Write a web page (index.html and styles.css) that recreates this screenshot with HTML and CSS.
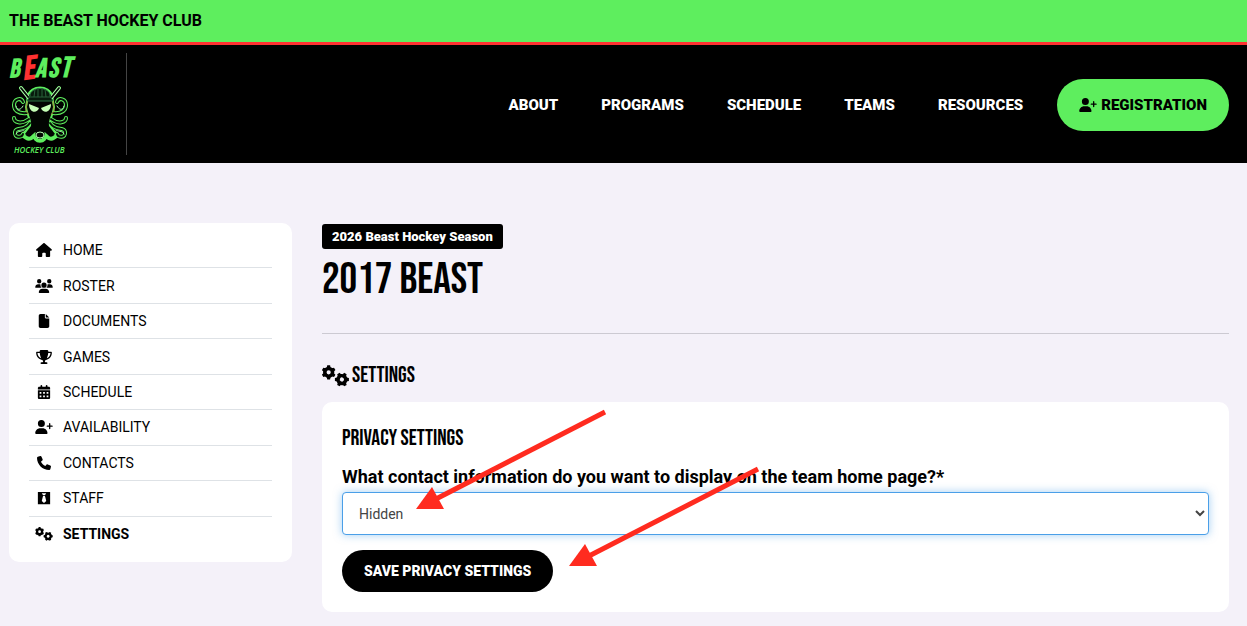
FILE: index.html
```html
<!DOCTYPE html>
<html lang="en">
  <head>
    <meta charset="UTF-8" />
    <meta name="viewport" content="width=device-width, initial-scale=1.0" />
    <title>2017 Beast - Settings</title>
    <link rel="stylesheet" href="styles.css">
  </head>

  <body>
    <!-- Icon sprite -->
    <svg class="sprite" aria-hidden="true">
      <symbol id="i-home" viewBox="0 0 576 512">
        <path d="M575.8 255.5c0 18-15 32.1-32 32.1h-32l.7 160.2c0 2.7-.2 5.4-.5 8.1V472c0 22.1-17.9 40-40 40H392c-22.1 0-40-17.9-40-40V384c0-17.7-14.3-32-32-32H256c-17.7 0-32 14.3-32 32v88c0 22.1-17.9 40-40 40H104c-22.1 0-40-17.9-40-40V287.6H32c-18 0-32-14-32-32.1c0-9 3-17 10-24L266.4 8c7-7 15-8 22-8s15 2 21 7L564.8 231.5c8 7 12 15 11 24z"/>
      </symbol>
      <symbol id="i-users" viewBox="0 0 640 512">
        <path d="M144 0a80 80 0 1 1 0 160A80 80 0 1 1 144 0zM512 0a80 80 0 1 1 0 160A80 80 0 1 1 512 0zM0 298.7C0 239.8 47.8 192 106.7 192h42.7c15.9 0 31 3.5 44.6 9.7c-1.3 7.2-1.9 14.7-1.9 22.3c0 38.2 16.8 72.5 43.3 96H21.3C9.6 320 0 310.4 0 298.7zM405.3 320c26-23.5 42.6-57.8 42.6-96c0-7.6-.7-15-1.9-22.3c13.6-6.3 28.7-9.7 44.6-9.7h42.7C592.2 192 640 239.8 640 298.7c0 11.8-9.6 21.3-21.3 21.3H405.3zM224 224a96 96 0 1 1 192 0 96 96 0 1 1 -192 0zM128 485.3C128 411.7 187.7 352 261.3 352H378.7C452.3 352 512 411.7 512 485.3c0 14.7-11.9 26.7-26.7 26.7H154.7c-14.7 0-26.7-11.9-26.7-26.7z"/>
      </symbol>
      <symbol id="i-file" viewBox="0 0 384 512">
        <path d="M0 64C0 28.7 28.7 0 64 0H224V128c0 17.7 14.3 32 32 32H384V448c0 35.3-28.7 64-64 64H64c-35.3 0-64-28.7-64-64V64zm384 64H256V0L384 128z"/>
      </symbol>
      <symbol id="i-trophy" viewBox="0 0 576 512">
        <path d="M400 0H176c-26.5 0-48.1 21.8-47.1 48.2c.2 5.3 .4 10.6 .7 15.8H24C10.7 64 0 74.7 0 88c0 92.6 33.5 157 78.5 200.7c44.3 43.1 98.3 64.8 138.1 75.8c23.4 6.5 39.4 26 39.4 45.6c0 20.9-17 37.9-37.9 37.9H192c-17.7 0-32 14.3-32 32s14.3 32 32 32H384c17.7 0 32-14.3 32-32s-14.3-32-32-32H357.9C337 448 320 431 320 410.1c0-19.6 15.9-39.2 39.4-45.6c39.9-11 93.9-32.7 138.2-75.8C542.5 245 576 180.6 576 88c0-13.3-10.7-24-24-24H446.4c.3-5.2 .5-10.4 .7-15.8C448.1 21.8 426.5 0 400 0zM48.9 112h84.4c9.1 90.1 29.2 150.3 51.9 190.6c-24.9-11-50.8-26.5-73.2-48.3c-32-31.1-58-76-63-142.3zM464.1 254.3c-22.4 21.8-48.3 37.3-73.2 48.3c22.7-40.3 42.8-100.5 51.9-190.6h84.4c-5.1 66.3-31.1 111.2-63 142.3z"/>
      </symbol>
      <symbol id="i-calendar" viewBox="0 0 448 512">
        <path fill-rule="evenodd" d="M128 0c17.700 0 32 14.300 32 32V64H288V32c0-17.700 14.300-32 32-32s32 14.300 32 32V64h48c26.500 0 48 21.500 48 48v48H0V112C0 85.500 21.500 64 48 64H96V32c0-17.700 14.300-32 32-32zM0 192H448V464c0 26.500-21.500 48-48 48H48c-26.500 0-48-21.500-48-48V192zM64 256v64h64v-64zM192 256v64h64v-64zM320 256v64h64v-64zM64 384v64h64v-64zM192 384v64h64v-64zM320 384v64h64v-64z"/>
      </symbol>
      <symbol id="i-user-plus" viewBox="0 0 640 512">
        <path d="M96 128a128 128 0 1 1 256 0A128 128 0 1 1 96 128zM0 482.300C0 383.800 79.800 304 178.300 304h91.400C368.200 304 448 383.800 448 482.300c0 16.400-13.300 29.700-29.700 29.700H29.700C13.300 512 0 498.700 0 482.300zM504 312V248H440c-13.300 0-24-10.700-24-24s10.700-24 24-24h64V136c0-13.300 10.700-24 24-24s24 10.700 24 24v64h64c13.300 0 24 10.700 24 24s-10.700 24-24 24H552v64c0 13.300-10.700 24-24 24s-24-10.700-24-24z"/>
      </symbol>
      <symbol id="i-phone" viewBox="0 0 512 512">
        <path d="M164.900 24.600c-7.700-18.600-28-28.500-47.400-23.200l-88 24C12.100 30.200 0 46 0 64C0 311.400 200.600 512 448 512c18 0 33.800-12.100 38.600-29.500l24-88c5.300-19.400-4.600-39.700-23.200-47.400l-96-40c-16.300-6.800-35.200-2.100-46.300 11.600L304.700 368C234.300 334.700 177.300 277.700 144 207.300L193.300 167c13.700-11.200 18.400-30 11.600-46.300l-40-96z"/>
      </symbol>
      <symbol id="i-tie" viewBox="0 0 448 512">
        <path fill-rule="evenodd" d="M0 32H448V480H0zM144 80l40 70h80l40-70zM190 176l-48 190 82 76 82-76-48-190z"/>
      </symbol>
      <symbol id="i-gears" viewBox="0 0 640 512">
        <g id="gear" transform="translate(158 170)">
          <circle r="92" fill="none" stroke="currentColor" stroke-width="84"/>
          <g id="teeth">
            <path id="tooth" d="M-46-110L-34-166H34L46-110zM-46 110L-34 166H34L46 110z"/>
            <use href="#tooth" transform="rotate(60)"/>
            <use href="#tooth" transform="rotate(120)"/>
          </g>
        </g>
        <g transform="translate(472 340) rotate(30)">
          <circle r="92" fill="none" stroke="currentColor" stroke-width="84"/>
          <use href="#teeth"/>
        </g>
      </symbol>
    </svg>

    <div class="topbar">The Beast Hockey Club</div>

    <header class="header">
      <a class="logo" href="#" aria-label="Beast Hockey Club">
        <svg viewBox="0 0 70 102" width="70" height="102">
          <g class="logo-word">
            <text x="0" y="24" font-size="26" transform="rotate(-3 8 20)">B</text>
            <text class="logo-red" x="13" y="26" font-size="33" transform="rotate(-7 20 16)">E</text>
            <text x="26" y="24" font-size="27">A</text>
            <text x="39" y="24" font-size="27">S</text>
            <text x="51" y="24" font-size="29">T</text>
          </g>
          <g fill="none" stroke-linecap="round" stroke-linejoin="round">
            <g stroke="#5eee5e" stroke-width="4">
              <path d="M12 35L20 45M50 35L42 45"/>
              <path id="curls" d="M18 60C9 61 5 57 5 52C5 46 12 44 14 49M44 60C53 61 57 57 57 52C57 46 50 44 48 49M20 66C12 72 5 69 5 65M42 66C50 72 57 69 57 65M21 70C15 79 7 73 6 79C5 85 13 85 14 81M41 70C47 79 55 73 56 79C57 85 49 85 48 81"/>
              <path d="M20 43C22 33 40 33 42 43L44 54C43 62 39 67 39 73L48 82C43 88 39 86 36 81C38 90 24 90 26 81C23 86 19 88 14 82L23 73C23 67 19 62 18 54Z"/>
            </g>
            <path d="M12 35L20 45M50 35L42 45" stroke="#d6ffd2" stroke-width="3"/>
            <g stroke="#051006" stroke-width="2">
              <use href="#curls"/>
              <path d="M12 35L20 45M50 35L42 45"/>
            </g>
            <g stroke="#a2f5ac" stroke-width="1">
              <path d="M7 53C8 58 12 57 14 53M55 53C54 58 50 57 48 53M7 81C9 77 13 79 15 77M55 81C53 77 49 79 47 77"/>
            </g>
          </g>
          <path d="M20 43C22 34 40 34 42 43L44 54C43 62 39 67 40 73L46 81C42 84 38 82 35 78C39 88 23 88 27 78C24 82 20 84 16 81L22 73C23 67 19 62 18 54Z" fill="#020502"/>
          <path d="M21 43C21 33 41 33 41 43L44 48H18Z" fill="#071a0c" stroke="#2b7742" stroke-width="1"/>
          <path d="M26 36L25 44M29 35V44M33 35V44M36 36L37 44M20 44H42" fill="none" stroke="#28633a" stroke-width="1"/>
          <path d="M18 48L17 58L20 62M44 48L45 58L42 62" fill="none" stroke="#a69b3c" stroke-width="1"/>
          <path d="M20 51L30 55C28 61 20 60 20 51ZM42 51L32 55C34 61 42 60 42 51Z" fill="#c6ffb7"/>
          <ellipse cx="31" cy="82" rx="4" ry="3" fill="#030803" stroke="#b7ffb5" stroke-width="1"/>
          <text class="logo-sub" x="5" y="100" font-size="8">HOCKEY CLUB</text>
        </svg>
      </a>
      <nav class="nav">
        <a href="#">About</a>
        <a href="#">Programs</a>
        <a href="#">Schedule</a>
        <a href="#">Teams</a>
        <a href="#">Resources</a>
        <a class="register" href="#"><svg class="icon"><use href="#i-user-plus"/></svg>Registration</a>
      </nav>
    </header>

    <div class="page">
      <aside class="sidebar">
        <ul class="menu">
          <li><a href="#"><svg class="icon"><use href="#i-home"/></svg>Home</a></li>
          <li><a href="#"><svg class="icon"><use href="#i-users"/></svg>Roster</a></li>
          <li><a href="#"><svg class="icon"><use href="#i-file"/></svg>Documents</a></li>
          <li><a href="#"><svg class="icon"><use href="#i-trophy"/></svg>Games</a></li>
          <li><a href="#"><svg class="icon"><use href="#i-calendar"/></svg>Schedule</a></li>
          <li><a href="#"><svg class="icon"><use href="#i-user-plus"/></svg>Availability</a></li>
          <li><a href="#"><svg class="icon"><use href="#i-phone"/></svg>Contacts</a></li>
          <li><a href="#"><svg class="icon"><use href="#i-tie"/></svg>Staff</a></li>
          <li class="active"><a href="#"><svg class="icon"><use href="#i-gears"/></svg>Settings</a></li>
        </ul>
      </aside>

      <main class="content">
        <div class="team-head">
          <span class="season">2026 Beast Hockey Season</span>
          <h1>2017 Beast</h1>
        </div>

        <h2><svg class="icon"><use href="#i-gears"/></svg>Settings</h2>

        <form class="card">
          <h3>Privacy Settings</h3>
          <label for="privacy">What contact information do you want to display on the team home page?*</label>
          <select id="privacy">
            <option selected>Hidden</option>
          </select>
          <button type="button">Save Privacy Settings</button>

          <!-- Arrows pointing at the drop-down and the button -->
          <svg class="arrows" viewBox="0 0 450 180" width="450" height="180" aria-hidden="true">
            <g id="arrow">
              <path d="M283 10L112 98" stroke="#ff2b1f" stroke-width="5"/>
              <path d="M94 107L110 85L122 107Z" fill="#ff2b1f"/>
            </g>
            <use href="#arrow" x="153" y="57"/>
          </svg>
        </form>
      </main>
    </div>
  </body>
</html>
```
FILE: styles.css
```css
* {
  box-sizing: border-box;
}

body {
  margin: 0;
  background-color: #f4f1f9;
  color: #000;
  font-family: Roboto, "Liberation Sans", sans-serif;
  font-size: 14px;
}

a {
  color: inherit;
  text-decoration: none;
}

.sprite {
  display: none;
}

.icon {
  width: 18px;
  height: 14px;
  fill: currentColor;
  flex-shrink: 0;
}

.topbar {
  padding: 9px;
  background-color: #5eee5e;
  border-bottom: 3px solid #ff3131;
  font-size: 16px;
  font-weight: 700;
  line-height: 24px;
  text-transform: uppercase;
}

.header {
  display: flex;
  justify-content: space-between;
  align-items: center;
  padding: 8px 18px 8px 9px;
  background-color: #000;
  color: #fff;
}

.logo {
  display: flex;
  width: 118px;
  border-right: 1px solid #444;
}

.logo svg {
  overflow: visible;
}

.logo-word,
.logo-sub {
  fill: #5eee5e;
  font-family: "Bebas Neue", "Open Sans", sans-serif;
  font-style: italic;
  font-weight: 700;
}

.logo-sub {
  font-family: "Open Sans", sans-serif;
  font-weight: 600;
}

.logo-red {
  fill: #ff3131;
}

.nav {
  display: flex;
  align-items: center;
  gap: 43px;
  padding-top: 2px;
  font-size: 15px;
  font-weight: 900;
  text-transform: uppercase;
}

.register {
  display: flex;
  align-items: center;
  gap: 4px;
  height: 52px;
  margin-left: -9px;
  padding: 0 22px;
  border-radius: 26px;
  background-color: #5eee5e;
  color: #000;
}

.page {
  display: grid;
  grid-template-columns: 283px 1fr;
  gap: 30px;
  align-items: start;
  padding: 60px 18px 14px 9px;
}

.sidebar {
  padding: 10px 20px;
  border-radius: 10px;
  background-color: #fff;
}

.menu {
  display: grid;
  grid-auto-rows: 1fr;
  min-height: 319px;
  margin: 0;
  padding: 0;
  list-style: none;
  text-transform: uppercase;
}

.menu li {
  display: flex;
  border-bottom: 1px solid #dee2e6;
}

.menu li:last-child {
  border-bottom: none;
}

.menu a {
  display: flex;
  flex: 1;
  align-items: center;
  gap: 10px;
  padding: 0 6px;
}

.menu .active {
  font-weight: 700;
}

.season {
  display: inline-block;
  padding: 0 10px;
  border-radius: 3px;
  background-color: #000;
  color: #fff;
  font-size: 13px;
  font-weight: 900;
  line-height: 25px;
}

.team-head {
  padding-top: 1px;
  padding-bottom: 26px;
  border-bottom: 1px solid #cccad2;
}

h1,
h2,
h3 {
  margin: 0;
  font-family: "Bebas Neue", "Roboto Condensed", "Liberation Sans Narrow", sans-serif;
  font-weight: 400;
  text-transform: uppercase;
}

h1 {
  margin-top: 4px;
  font-size: 44px;
  line-height: 54px;
}

h2 {
  display: flex;
  align-items: center;
  gap: 3px;
  margin: 26px 0 10px;
  font-size: 22px;
  line-height: 32px;
}

h2 .icon {
  width: 27px;
  height: 22px;
}

h3 {
  margin-bottom: 8px;
  font-size: 22px;
  line-height: 34px;
}

.card {
  position: relative;
  display: flex;
  flex-direction: column;
  align-items: flex-start;
  padding: 20px;
  border-radius: 10px;
  background-color: #fff;
}

.card label {
  margin-bottom: 2px;
  font-size: 18px;
  font-weight: 700;
  line-height: 26px;
}

.card select {
  width: 100%;
  height: 43px;
  margin-bottom: 15px;
  padding: 0 0 0 12px;
  border: 1px solid #4a9fe8;
  border-radius: 4px;
  outline: none;
  background-color: #fff;
  box-shadow: 0 0 8px rgba(74, 159, 232, 0.5);
  color: #444;
  font-family: inherit;
  font-size: 14px;
}

.card button {
  height: 42px;
  padding: 0 22px;
  border: none;
  border-radius: 21px;
  background-color: #000;
  color: #fff;
  font-family: inherit;
  font-size: 14px;
  font-weight: 900;
  text-transform: uppercase;
  cursor: pointer;
}

.arrows {
  position: absolute;
  top: 0;
  left: 0;
  pointer-events: none;
}
```
